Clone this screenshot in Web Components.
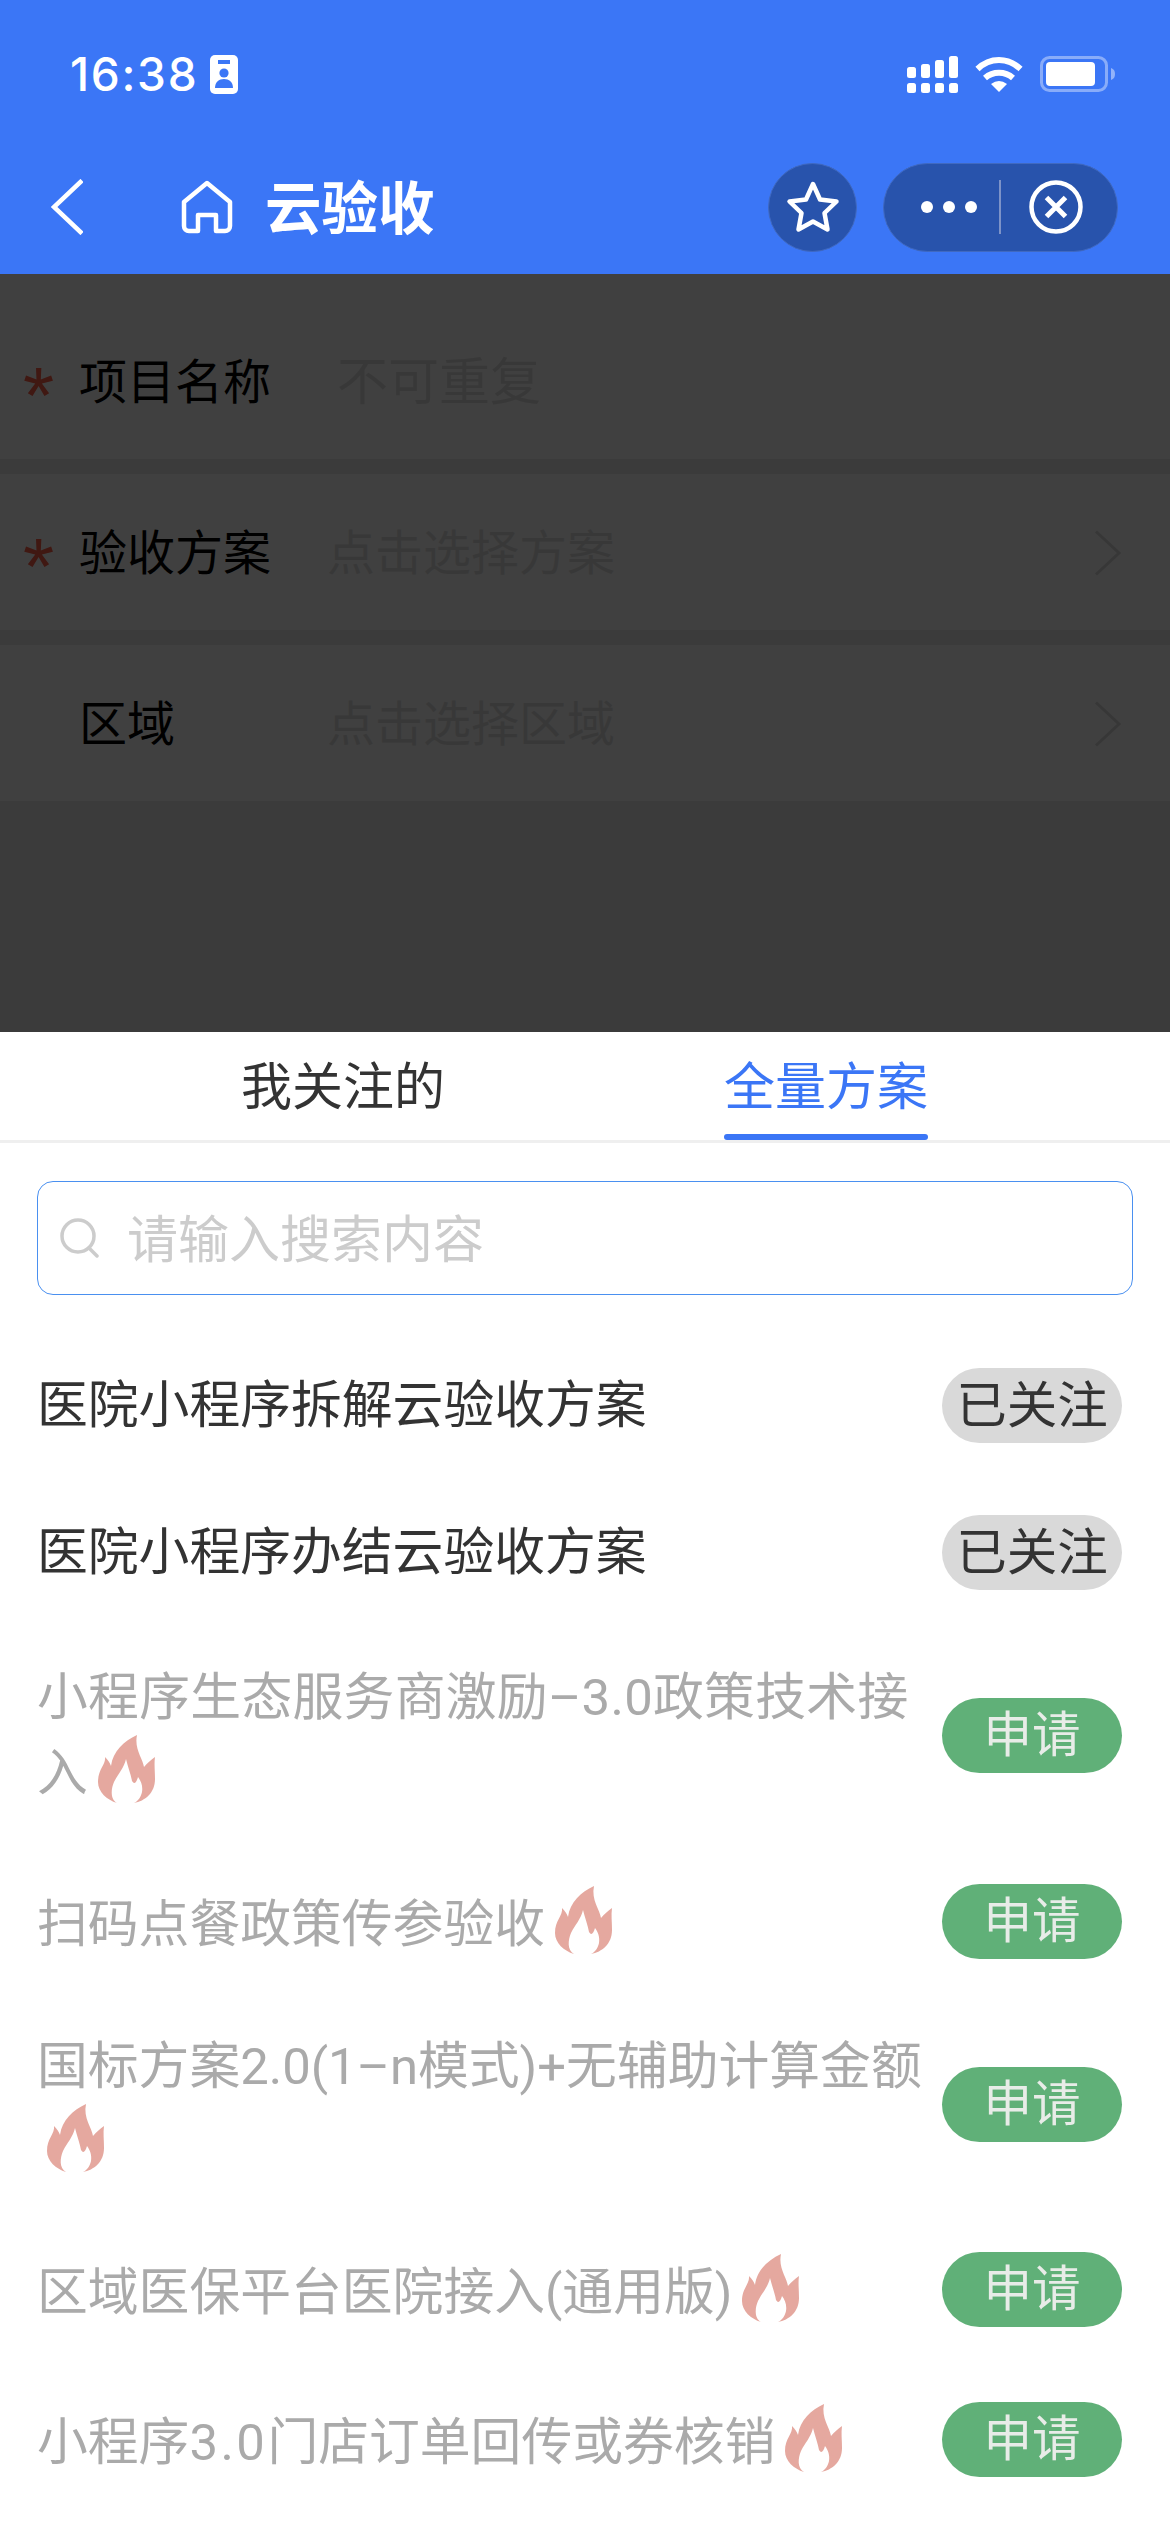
<!DOCTYPE html>
<html lang="zh">
<head>
<meta charset="utf-8">
<title>云验收</title>
<style>
  html, body { margin: 0; padding: 0; }
  body {
    width: 1170px;
    height: 2532px;
    overflow: hidden;
    font-family: "Noto Sans CJK SC", sans-serif;
  }
</style>
</head>
<body>
<app-shell>
  <status-bar slot="top" time="16:38"></status-bar>
  <nav-bar slot="top" title="云验收"></nav-bar>

  <form-row slot="form" label="项目名称" required placeholder="不可重复" class="first"></form-row>
  <form-row slot="form" label="验收方案" required placeholder="点击选择方案" arrow></form-row>
  <form-row slot="form" label="区域" placeholder="点击选择区域" arrow></form-row>

  <tab-bar slot="sheet"></tab-bar>
  <search-box slot="sheet" placeholder="请输入搜索内容"></search-box>
  <plan-list slot="sheet">
    <plan-row followed>医院小程序拆解云验收方案</plan-row>
    <plan-row followed>医院小程序办结云验收方案</plan-row>
    <plan-row hot style="height:219px;letter-spacing:.3px">小程序生态服务商激励–3.0政策技术接入</plan-row>
    <plan-row hot single style="height:152px">扫码点餐政策传参验收</plan-row>
    <plan-row hot style="height:215px">国标方案2.0(1–n模式)+无辅助计算金额</plan-row>
    <plan-row hot single style="height:155px">区域医保平台医院接入(通用版)</plan-row>
    <plan-row hot single style="height:145px">小程序<span style="letter-spacing:2.5px">3.0</span>门店订单回传或券核销</plan-row>
  </plan-list>
</app-shell>

<script>
// small helper, every element gets an open shadow root with its own style
function mount(el, html) {
  el.attachShadow({ mode: 'open' });
  el.shadowRoot.innerHTML = html;
}

class AppShell extends HTMLElement {
  connectedCallback() {
    mount(this, `
      <style>
        :host { display: flex; flex-direction: column; width: 1170px; height: 2532px; background: #fff; }
        .top { background: #3b76f6; height: 274px; display: flex; flex-direction: column; }
        .page { position: relative; height: 758px; background: #ebebeb; box-sizing: border-box; }
        .form { display: flex; flex-direction: column; gap: 15px; }
        .mask { position: absolute; inset: 0; background: rgba(0, 0, 0, .75); }
        .sheet { flex: 1; background: #fff; display: flex; flex-direction: column; min-height: 0; }
      </style>
      <div class="top"><slot name="top"></slot></div>
      <div class="page">
        <div class="form"><slot name="form"></slot></div>
        <div class="mask"></div>
      </div>
      <div class="sheet"><slot name="sheet"></slot></div>
    `);
  }
}

class StatusBar extends HTMLElement {
  connectedCallback() {
    mount(this, `
      <style>
        :host { display: flex; align-items: center; height: 148px; padding: 0 55px 0 70px; color: #fff; }
        .time { font: 500 46px/1 "Inter", sans-serif; letter-spacing: 1.7px; }
        .person { margin-left: 12px; }
        .right { margin-left: auto; display: flex; align-items: center; }
        svg { display: block; }
        .wifi { margin-left: 17px; }
        .batt { margin-left: 17px; }
      </style>
      <span class="time">${this.getAttribute('time')}</span>
      <svg class="person" width="28" height="39" viewBox="0 0 28 39">
        <rect width="28" height="39" rx="5" fill="#fff"/>
        <rect x="8" y="5" width="12" height="4" fill="#3b76f6"/>
        <circle cx="14" cy="18" r="4.6" fill="#3b76f6"/>
        <path d="M5 33c0-6 4-9 9-9s9 3 9 9z" fill="#3b76f6"/>
      </svg>
      <div class="right">
        <svg width="51" height="37" viewBox="0 0 51 37" fill="#fff">
          <rect x="0" y="11" width="9" height="11" rx="2.5"/>
          <rect x="14" y="8" width="9" height="14" rx="2.5"/>
          <rect x="28" y="4" width="9" height="18" rx="2.5"/>
          <rect x="42" y="0" width="9" height="22" rx="2.5"/>
          <rect x="0" y="27" width="9" height="10" rx="2.5"/>
          <rect x="14" y="27" width="9" height="10" rx="2.5"/>
          <rect x="28" y="27" width="9" height="10" rx="2.5"/>
          <rect x="42" y="27" width="9" height="10" rx="2.5"/>
        </svg>
        <svg class="wifi" width="48" height="36" viewBox="0 0 48 36" fill="none" stroke="#fff" stroke-width="6">
          <path d="M2.5 13C15 1 33 1 45.5 13"/>
          <path d="M10 22C18 15 30 15 38 22"/>
          <path d="M16 28Q24 22 32 28L24 36Z" fill="#fff" stroke="none"/>
        </svg>
        <svg class="batt" width="75" height="36" viewBox="0 0 75 36">
          <rect x="1.5" y="1.5" width="65" height="33" rx="8" fill="none" stroke="#fff" stroke-opacity=".4" stroke-width="3"/>
          <rect x="6" y="6" width="49" height="24" rx="4" fill="#fff"/>
          <path d="M71 12c3 1 4 3 4 6s-1 5-4 6z" fill="#fff" fill-opacity=".45"/>
        </svg>
      </div>
    `);
  }
}

class NavBar extends HTMLElement {
  connectedCallback() {
    mount(this, `
      <style>
        :host { display: flex; align-items: center; height: 118px; color: #fff; padding-left: 51px; }
        svg { display: block; flex: none; }
        .home { margin-left: 98px; }
        .title { margin-left: 32px; padding-bottom: 6px; font: 600 56.5px/1 "Noto Sans CJK SC", sans-serif; }
        .fav, .capsule {
          height: 89px; box-sizing: border-box; background: #2853ac;
          border: 1px solid #4069c0; border-radius: 45px;
          display: flex; align-items: center; justify-content: center;
        }
        .fav { width: 89px; margin-left: auto; }
        .capsule { width: 235px; margin: 0 52px 0 26px; padding-left: 37px; justify-content: flex-start; }
        .line { width: 2px; height: 54px; background: #7d93c8; margin: 0 28px 0 22px; }
      </style>
      <svg width="32" height="56" viewBox="0 0 32 56" fill="none" stroke="#fff" stroke-width="4.5">
        <path d="M31 1.5L3 28L31 54.5"/>
      </svg>
      <svg class="home" width="52" height="54" viewBox="0 0 52 54" fill="none" stroke="#fff" stroke-width="4.5" stroke-linejoin="round">
        <path d="M3 22L26 3L49 22V46a5 5 0 0 1-5 5H35V35H17V51H8a5 5 0 0 1-5-5Z"/>
      </svg>
      <span class="title">${this.getAttribute('title')}</span>
      <div class="fav">
        <svg width="54" height="52" viewBox="0 0 54 52" fill="none" stroke="#fff" stroke-width="4.5" stroke-linejoin="round">
          <path d="M27 3L34 18.500L50.500 20.500L38.500 32L41.500 48.500L27 40.500L12.500 48.500L15.500 32L3.500 20.500L20 18.500Z"/>
        </svg>
      </div>
      <div class="capsule">
        <svg width="56" height="12" viewBox="0 0 56 12" fill="#fff">
          <circle cx="6" cy="6" r="6"/><circle cx="28" cy="6" r="6"/><circle cx="50" cy="6" r="6"/>
        </svg>
        <span class="line"></span>
        <svg width="54" height="54" viewBox="0 0 54 54" fill="none" stroke="#fff" stroke-width="4.5">
          <circle cx="27" cy="27" r="24.500"/>
          <path d="M17.500 17.500L36.500 36.500M36.500 17.500L17.500 36.500" stroke-width="5"/>
        </svg>
      </div>
    `);
  }
}

class FormRow extends HTMLElement {
  connectedCallback() {
    const required = this.hasAttribute('required');
    const arrow = this.hasAttribute('arrow');
    mount(this, `
      <style>
        :host { display: flex; align-items: center; height: 156px; box-sizing: border-box; padding-bottom: 6px; background: #fff; position: relative; font-family: "Noto Sans CJK SC", sans-serif; }
        :host(.first) { height: 185px; padding-top: 29px; }
        .star { width: 79px; flex: none; box-sizing: border-box; padding: 36px 0 0 23px; color: #ff5f48; font: 400 80px/80px "Liberation Sans", sans-serif; }
        .label { width: 248px; font-size: 48px; line-height: 60px; color: #000; }
        .ph { font-size: 48px; line-height: 60px; color: #e0e0e0; }
        :host(.first) .label { width: 258px; }
        :host(.first) .ph { font-size: 51px; }
        svg { position: absolute; right: 48px; top: 56px; }
      </style>
      <div class="star">${required ? '*' : ''}</div>
      <div class="label">${this.getAttribute('label')}</div>
      <div class="ph">${this.getAttribute('placeholder')}</div>
      ${arrow ? `<svg width="28" height="46" viewBox="0 0 28 46" fill="none" stroke="#dcdcdc" stroke-width="3"><path d="M2 1.500L25 23L2 44.500"/></svg>` : ''}
    `);
  }
}

class TabBar extends HTMLElement {
  connectedCallback() {
    mount(this, `
      <style>
        :host { display: flex; height: 111px; box-sizing: border-box; border-bottom: 3px solid #efefef; font-family: "Noto Sans CJK SC", sans-serif; padding-left: 241px; gap: 279px; }
        .tab { width: 204px; height: 108px; box-sizing: border-box; text-align: center; font-size: 51px; line-height: 60px; padding-top: 21px; color: #333; position: relative; white-space: nowrap; }
        .tab.on { color: #3b76f6; }
        .tab.on::after { content: ""; position: absolute; left: 0; right: 0; bottom: 0; height: 6px; background: #3b76f6; border-radius: 3px; }
      </style>
      <div class="tab">我关注的</div>
      <div class="tab on">全量方案</div>
    `);
  }
}

class SearchBox extends HTMLElement {
  connectedCallback() {
    mount(this, `
      <style>
        :host { display: flex; align-items: center; margin: 38px 37px 0; height: 114px; box-sizing: border-box; border: 1.5px solid #4a90f0; border-radius: 16px; padding-left: 22px; font-family: "Noto Sans CJK SC", sans-serif; }
        svg { display: block; flex: none; }
        .ph { margin-left: 27px; padding-bottom: 4px; font-size: 51px; line-height: 60px; color: #ccc; }
      </style>
      <svg width="40" height="40" viewBox="0 0 40 40" fill="none" stroke="#ccc" stroke-width="3.500">
        <circle cx="18" cy="18" r="16"/><path d="M29 30L37 38" stroke-linecap="round"/>
      </svg>
      <span class="ph">${this.getAttribute('placeholder')}</span>
    `);
  }
}

class PlanList extends HTMLElement {
  connectedCallback() {
    mount(this, `
      <style>:host { display: block; padding-top: 37px; }</style>
      <slot></slot>
    `);
  }
}

class FlameIcon extends HTMLElement {
  connectedCallback() {
    mount(this, `
      <style>
        :host { display: inline-block; width: 57px; height: 68px; margin-left: 10px; vertical-align: -12px; }
        svg { display: block; }
      </style>
      <svg width="57" height="68" viewBox="0 0 57 68" fill="#e5a89f">
        <path d="M39 0C26 6 15 16 13 31C12 28 10 25 7 22C8 30 0 34 0 47C0 57 9 65 19 68C12 64 13 54 16 47C20 39 26 33 28 24C30 32 33 40 34 46C36 49 38 49 40 42C43 46 45 51 44 57C43 62 40 66 36 68C47 66 57 58 57 44C57 36 56 29 57 22C53 25 49 28 46 32C45 24 36 14 39 0Z"/>
      </svg>
    `);
  }
}

class PlanRow extends HTMLElement {
  connectedCallback() {
    const followed = this.hasAttribute('followed');
    mount(this, `
      <style>
        :host { display: flex; align-items: center; height: 147px; box-sizing: border-box; padding: 0 48px 0 37px; font-family: "Roboto", "Noto Sans CJK SC", sans-serif; }
        :host([single]) .text { padding-top: 5px; }
        .text { flex: 1; min-width: 0; padding-right: 17px; font-size: 50.800px; line-height: 74px; color: ${followed ? '#333' : '#aaa'}; }
        .btn {
          flex: none; width: 180px; height: 75px; border-radius: 38px; text-align: center; letter-spacing: 0;
          font-size: ${followed ? '50.500px' : '48.500px'}; line-height: 75px;
          background: ${followed ? '#d9d9d9' : '#60b078'};
          color: ${followed ? '#333' : '#e8ece8'};
          white-space: nowrap;
        }
      </style>
      <div class="text"><slot></slot>${this.hasAttribute('hot') ? '<flame-icon></flame-icon>' : ''}</div>
      <div class="btn">${followed ? '已关注' : '申请'}</div>
    `);
  }
}

customElements.define('app-shell', AppShell);
customElements.define('status-bar', StatusBar);
customElements.define('nav-bar', NavBar);
customElements.define('form-row', FormRow);
customElements.define('tab-bar', TabBar);
customElements.define('search-box', SearchBox);
customElements.define('plan-list', PlanList);
customElements.define('flame-icon', FlameIcon);
customElements.define('plan-row', PlanRow);
</script>
</body>
</html>
